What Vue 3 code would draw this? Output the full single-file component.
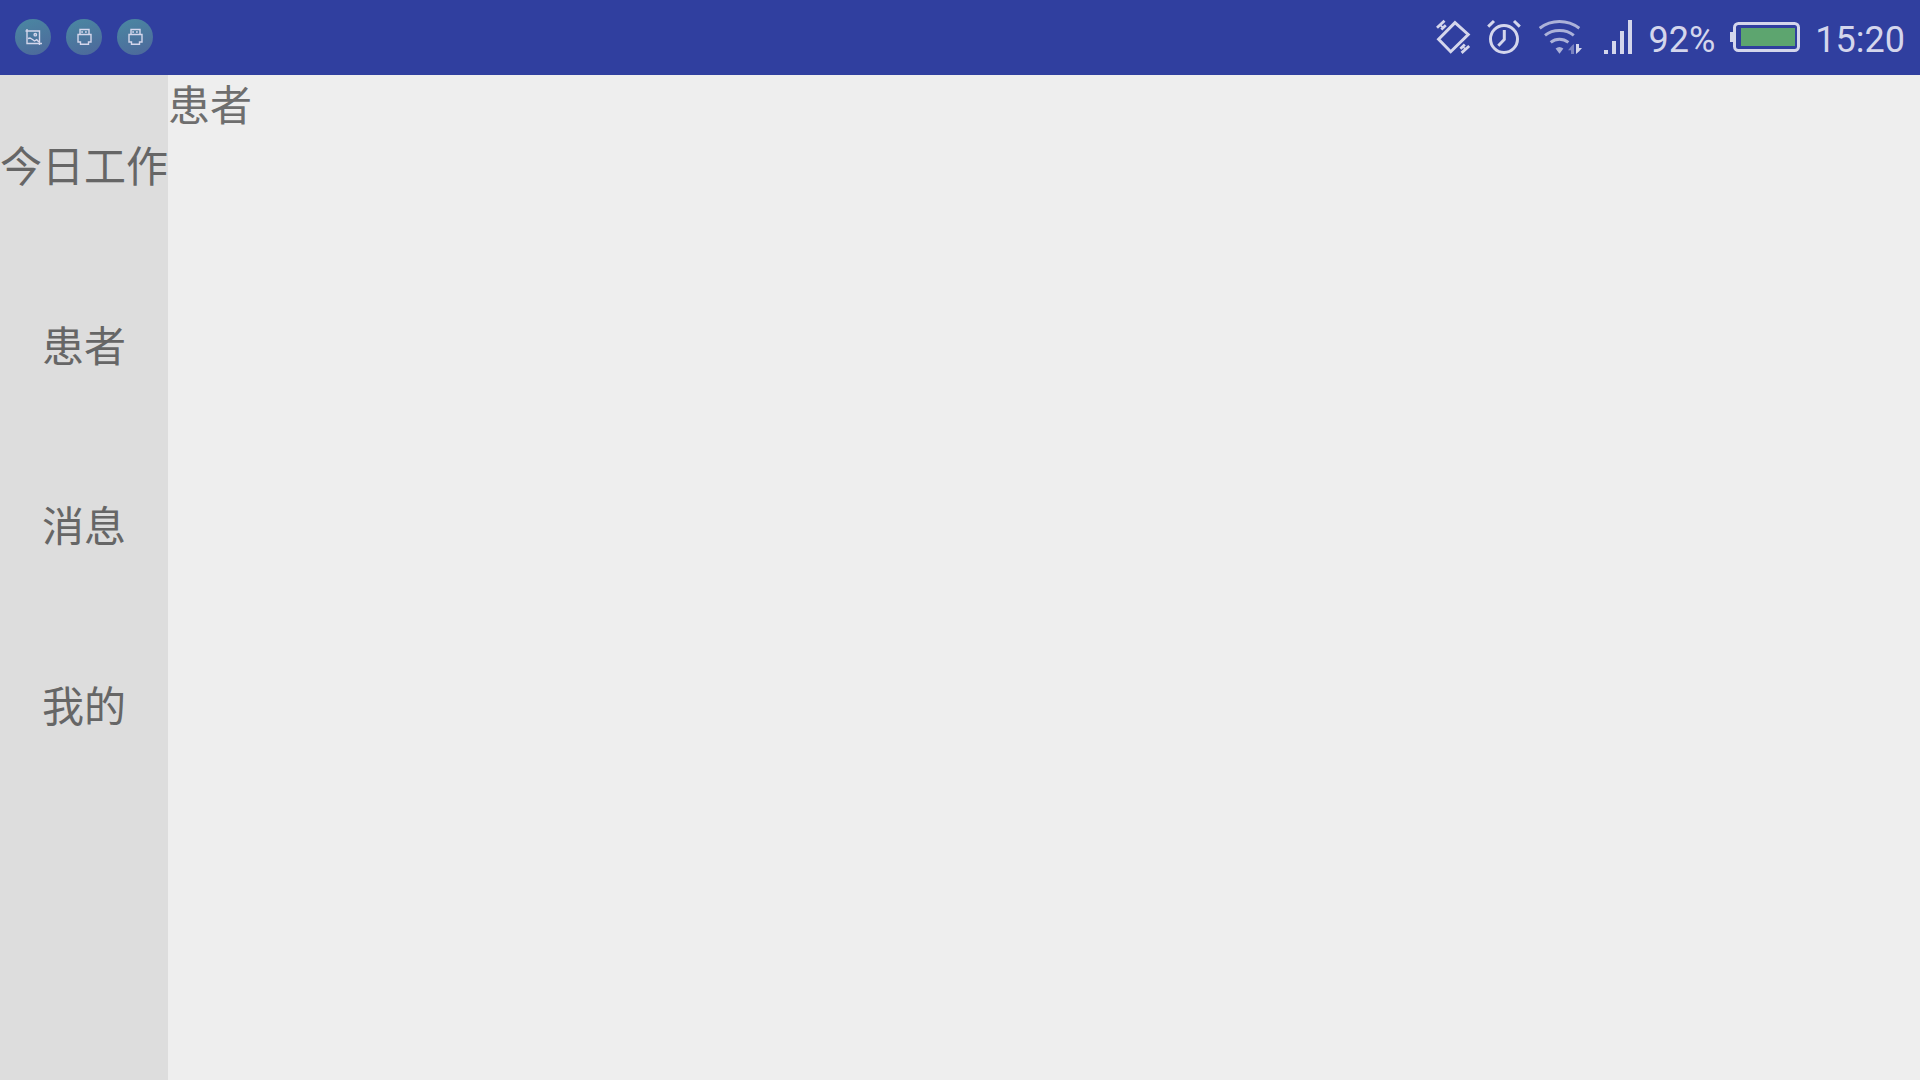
<template>
  <div class="screen">
    <header class="status-bar">
      <div class="notifications">
        <span v-for="(icon, i) in notifications" :key="i" class="badge">
          <svg v-if="icon === 'image'" width="36" height="36" viewBox="0 0 36 36">
            <path d="M12 10V24.5H27M10.5 12H24.5V26" />
            <circle cx="20.3" cy="15.7" r="1.2" />
            <path d="M13 19.5L15 19L17.5 20.5L19.5 22L21.7 20.7L24 23" />
          </svg>
          <svg v-else width="36" height="36" viewBox="0 0 36 36">
            <path d="M14 15V10.5H23V15" />
            <path d="M12 15.5H25V23H22.5V25.3H14.5V23H12Z" />
            <path d="M15.2 13H17M19 13H20.8" />
          </svg>
        </span>
      </div>

      <div class="indicators">
        <svg class="line" width="36" height="36" viewBox="0 0 36 36">
          <path d="M19 3.6L32.2 15.5L14.7 32.7L2.6 20.3Z" />
          <path d="M1 8.8L8.5 1.8M5.3 10.4L9.8 6.2" stroke-width="2.8" />
          <path d="M25.6 33.9L33.2 27M24.4 29.8L28.8 25.6" stroke-width="2.8" />
          <path d="M4.5 6.5L8 9M26.5 27.5L30 30.5" stroke-width="1.6" />
        </svg>
        <svg class="line" width="36" height="36" viewBox="0 0 36 36">
          <circle cx="17" cy="20" r="13.5" />
          <path d="M17.3 11V20.5L11.3 26.7" />
          <path d="M1.2 7.6L7 2M27 2L32.8 7.6" />
        </svg>
        <svg width="46" height="36" viewBox="0 0 46 36">
          <g class="wifi">
            <path d="M1.7 9.2Q10.5 2.5 21.4 2.5T41.3 9.2" />
            <path d="M7 16.3Q13 11.5 21.4 11.5T35.8 16.3" />
            <path d="M12.7 23.4Q16.5 20.3 21.4 20.3T30.4 23.4" />
          </g>
          <path class="dim" d="M17.6 29.6Q21.4 26.4 25.4 29.6L21.5 34.8Z" />
          <path class="faint" d="M36 25V35H33V31.3H30L34 26.5Z" />
          <path class="solid" d="M38 25H41V29H44L41 32.5L38 35Z" />
        </svg>
        <svg class="solid" width="35" height="36" viewBox="0 0 35 36">
          <rect v-for="bar in signal" :key="bar.x" :x="bar.x" :y="35 - bar.h" width="4" :height="bar.h" />
        </svg>
        <span class="status-text">92%</span>
        <svg width="70" height="36" viewBox="0 0 70 36">
          <rect class="solid" x="0" y="13" width="4" height="10" />
          <rect class="case" x="4.5" y="4.5" width="64" height="27" rx="4" />
          <rect class="charge" x="11" y="9" width="54" height="18" />
        </svg>
        <time class="status-text">15:20</time>
      </div>
    </header>

    <div class="body">
      <nav class="sidebar">
        <button
          v-for="tab in tabs"
          :key="tab"
          type="button"
          class="tab"
          @click="current = tab"
        >
          {{ tab }}
        </button>
      </nav>
      <main class="content">{{ current }}</main>
    </div>
  </div>
</template>

<script setup>
import { ref } from 'vue';

const notifications = ['image', 'usb', 'usb'];

const signal = [
  { x: 5, h: 4 },
  { x: 13, h: 13 },
  { x: 21, h: 23 },
  { x: 29, h: 34 }
];

const tabs = ['今日工作', '患者', '消息', '我的'];

const current = ref('患者');
</script>

<style>
body {
  margin: 0;
}
</style>

<style scoped>
.screen {
  display: flex;
  flex-direction: column;
  min-height: 100vh;
  background-color: #eeeeee;
  font-family: Roboto, "Noto Sans CJK SC", sans-serif;
}

.status-bar {
  display: flex;
  align-items: center;
  justify-content: space-between;
  box-sizing: border-box;
  height: 75px;
  padding: 0 15px 1px;
  background-color: #303f9f;
  color: #d4d6ec;
}

.notifications,
.indicators {
  display: flex;
  align-items: center;
  gap: 15px;
}

svg {
  display: block;
  fill: none;
}

.badge {
  border-radius: 50%;
  background: linear-gradient(160deg, #4a88a2, #4d679b);
}

.badge svg {
  stroke: #d4d6ec;
  stroke-width: 1.4;
}

.line {
  stroke: #d4d6ec;
  stroke-width: 3;
}

.wifi {
  stroke: #acb2d9;
  stroke-width: 3;
}

.solid {
  fill: #d4d6ec;
}

.dim {
  fill: #acb2d9;
}

.faint {
  fill: #7982c0;
}

.case {
  stroke: #d4d6ec;
  stroke-width: 3;
}

.charge {
  fill: #5da56f;
}

.status-text {
  padding-top: 6px;
  font-size: 36px;
  line-height: 42px;
}

.body {
  display: flex;
  flex: 1;
}

.sidebar {
  display: flex;
  flex-direction: column;
  background-color: #dddddd;
}

.tab {
  height: 180px;
  padding: 0 0 4px;
  border: none;
  background: none;
  color: #666666;
  font-family: "Noto Sans CJK SC", sans-serif;
  font-size: 42px;
  cursor: pointer;
}

.content {
  flex: 1;
  color: #6e6e6e;
  font-family: "Noto Sans CJK SC", sans-serif;
  font-size: 42px;
  line-height: 55px;
}
</style>
